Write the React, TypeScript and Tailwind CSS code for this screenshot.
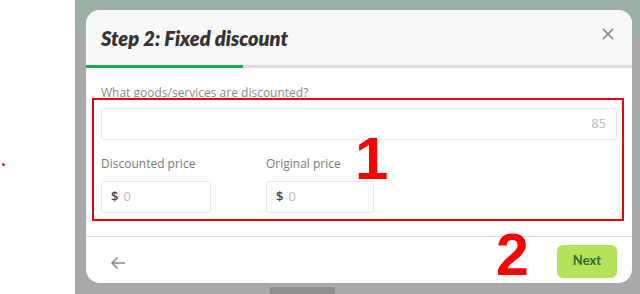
import React from "react";

export default function App() {
  return (
    <div className="flex w-[640px] h-[294px] overflow-hidden bg-white" style={{ fontFamily: "'Open Sans', sans-serif" }}>
      <div className="relative w-[75px] shrink-0 bg-white">
        <div className="absolute left-[2px] top-[163px] h-[3px] w-[3px] rounded-full bg-[#d4212b]" />
      </div>
      <div className="relative flex-1 bg-[linear-gradient(#9eb0a5_0_35px,#a9a9a9_35px)] pl-[11px] pr-[8px] pt-[10px]">
        <div className="absolute left-[195px] top-[287px] h-[7px] w-[65px] rounded-t-[2px] bg-[#8e8e8e]" />
        <div className="relative flex h-[273px] flex-col overflow-hidden rounded-[14px] bg-white">
          {/* header */}
          <div className="flex h-[55px] items-center justify-between bg-[#f8f8f8] pl-[15px] pr-[18px]">
            <span className="text-[20px] font-extrabold italic text-[#333]" style={{ fontFamily: "Lato, sans-serif" }}>
              Step 2: Fixed discount
            </span>
            <svg width="12" height="12" viewBox="0 0 12 12" className="mb-[8px] text-[#777]">
              <path d="M1 1L11 11M11 1L1 11" stroke="currentColor" strokeWidth="1.4" />
            </svg>
          </div>
          {/* progress */}
          <div className="flex h-[3px] bg-[#dcdcdc]">
            <div className="w-[157px] bg-[#23a55a]" />
          </div>
          {/* body */}
          <div className="flex flex-col px-[15px] pt-[16px] pb-[23px] border-b border-[#e2e2e2]">
            <label className="text-[12px] leading-[18px] text-[#8a8a8a]">What goods/services are discounted?</label>
            <div className="mt-[6px] flex h-[32px] items-center justify-end rounded-[3px] border border-[#e6e6e6] pr-[10px] text-[13px] text-[#bcbcbc]">
              85
            </div>
            <div className="mt-[15px] flex gap-[55px]">
              <div className="flex flex-col">
                <label className="text-[12px] leading-[18px] text-[#7a7a7a]">Discounted price</label>
                <div className="mt-[8px] flex h-[32px] w-[110px] items-center rounded-[3px] border border-[#e6e6e6] pl-[9px] text-[13px]">
                  <span className="font-semibold text-[#444]">$</span>
                  <span className="ml-[5px] text-[#bcbcbc]">0</span>
                </div>
              </div>
              <div className="flex flex-col">
                <label className="text-[12px] leading-[18px] text-[#7a7a7a]">Original price</label>
                <div className="mt-[8px] flex h-[32px] w-[108px] items-center rounded-[3px] border border-[#e6e6e6] pl-[9px] text-[13px]">
                  <span className="font-semibold text-[#444]">$</span>
                  <span className="ml-[5px] text-[#bcbcbc]">0</span>
                </div>
              </div>
            </div>
          </div>
          {/* footer */}
          <div className="flex flex-1 items-center justify-between pt-[2px] pl-[24px] pr-[15px]">
            <svg width="16" height="14" viewBox="0 0 16 14" className="mt-[3px] text-[#888]">
              <path d="M15 7H2M7.5 1.5L2 7l5.5 5.5" fill="none" stroke="currentColor" strokeWidth="1.5" />
            </svg>
            <button className="h-[33px] w-[60px] rounded-[6px] bg-[#b3e35b] text-[13px] font-bold text-[#2d6a30]" style={{ fontFamily: "Lato, sans-serif" }}>
              Next
            </button>
          </div>
        </div>
        {/* annotations */}
        <div className="absolute left-[17px] top-[98px] h-[123px] w-[532px] border-2 border-[#e8040a]" />
        <span className="absolute left-[280px] top-[135px] text-[60px] font-bold leading-[48px] text-[#ff0000]" style={{ fontFamily: "'Liberation Sans', Arial, sans-serif" }}>1</span>
        <span className="absolute left-[421px] top-[231px] text-[59px] font-bold leading-[48px] text-[#ff0000]" style={{ fontFamily: "'Liberation Sans', Arial, sans-serif" }}>2</span>
      </div>
    </div>
  );
}
